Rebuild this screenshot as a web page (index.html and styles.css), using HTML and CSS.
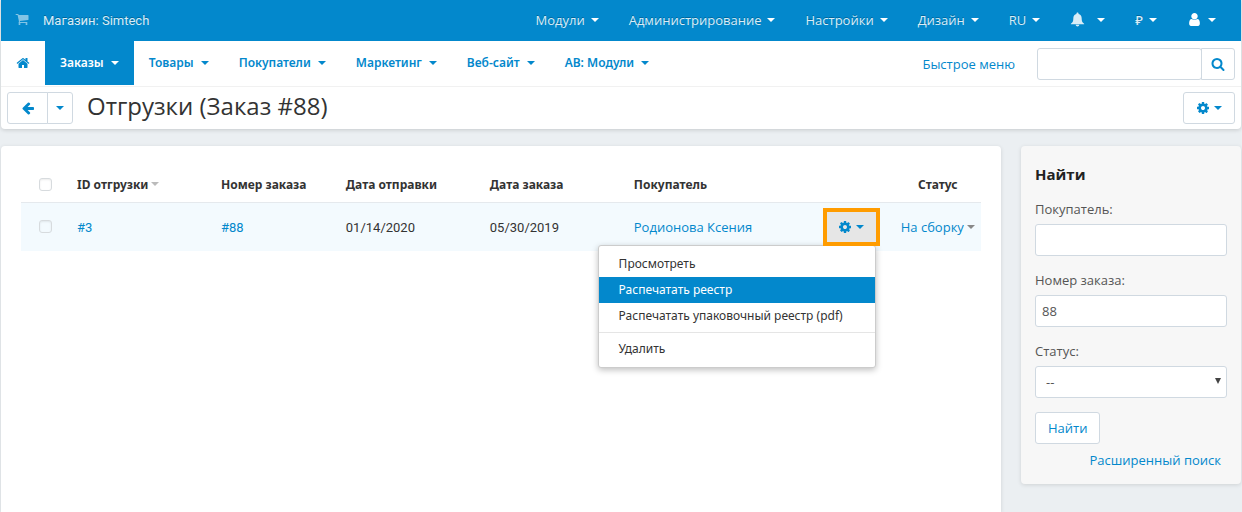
FILE: index.html
```html
<!DOCTYPE html>
<html lang="ru">
<head>
<meta charset="utf-8">
<meta name="viewport" content="width=device-width, initial-scale=1">
<title>Отгрузки (Заказ #88)</title>
<link rel="stylesheet" href="styles.css">
</head>
<body>
<svg class="sprite" aria-hidden="true">
  <symbol id="i-cart" viewBox="0 0 1792 1792"><path d="M704 1536q0 52-38 90t-90 38-90-38-38-90 38-90 90-38 90 38 38 90zm896 0q0 52-38 90t-90 38-90-38-38-90 38-90 90-38 90 38 38 90zm128-1088v512q0 24-16.500 42.500t-40.500 21.500l-1044 122q13 60 13 70 0 16-24 64h920q26 0 45 19t19 45-19 45-45 19h-1024q-26 0-45-19t-19-45q0-11 8-31.500t16-36 21.500-40 15.500-29.500l-177-823h-204q-26 0-45-19t-19-45 19-45 45-19h256q16 0 28.500 6.500t19.500 15.500 13 24.500 8 26 5.500 29.500 4.500 26h1201q26 0 45 19t19 45z"/></symbol>
  <symbol id="i-home" viewBox="0 0 1792 1792"><path d="M1472 992v480q0 26-19 45t-45 19h-384v-384h-256v384h-384q-26 0-45-19t-19-45v-480q0-1 .5-3t.5-3l575-474 575 474q1 2 1 6zm223-69l-62 74q-8 9-21 11h-3q-13 0-21-7l-692-577-692 577q-12 8-24 7-13-2-21-11l-62-74q-8-10-7-23.500t11-21.500l719-599q32-26 76-26t76 26l244 204v-195q0-14 9-23t23-9h192q14 0 23 9t9 23v408l219 182q10 8 11 21.500t-7 23.500z"/></symbol>
  <symbol id="i-back" viewBox="0 0 1792 1792"><path d="M1664 896v128q0 53-32.500 90.500t-84.500 37.500h-704l293 294q38 36 38 90t-38 90l-75 76q-37 37-90 37-52 0-91-37l-651-652q-37-37-37-90 0-52 37-91l651-650q38-38 91-38 52 0 90 38l75 74q38 38 38 91t-38 91l-293 293h704q52 0 84.500 37.500t32.500 90.500z"/></symbol>
  <symbol id="i-cog" viewBox="0 0 1792 1792"><path d="M1152 896q0-106-75-181t-181-75-181 75-75 181 75 181 181 75 181-75 75-181zm512-109v222q0 12-8 23t-20 13l-185 28q-19 54-39 91 35 50 107 138 10 12 10 25t-9 23q-27 37-99 108t-94 71q-12 0-26-9l-138-108q-44 23-91 38-16 136-29 186-7 28-36 28h-222q-14 0-24.500-8.500t-11.500-21.500l-28-184q-49-16-90-37l-141 107q-10 9-25 9-14 0-25-11-126-114-165-168-7-10-7-23 0-12 8-23 15-21 51-66.500t54-70.500q-27-50-41-99l-183-27q-13-2-21-12.500t-8-23.500v-222q0-12 8-23t19-13l186-28q14-46 39-92-40-57-107-138-10-12-10-24 0-10 9-23 26-36 98.500-107.500t94.500-71.500q13 0 26 10l138 107q44-23 91-38 16-136 29-186 7-28 36-28h222q14 0 24.500 8.500t11.500 21.500l28 184q49 16 90 37l142-107q9-9 24-9 13 0 25 10 129 119 165 170 7 8 7 22 0 12-8 23-15 21-51 66.500t-54 70.500q26 50 41 98l183 28q13 2 21 12.500t8 23.500z"/></symbol>
  <symbol id="i-search" viewBox="0 0 1792 1792"><path d="M1216 832q0-185-131.500-316.500t-316.500-131.500-316.500 131.500-131.500 316.500 131.500 316.500 316.500 131.500 316.500-131.500 131.500-316.500zm512 832q0 52-38 90t-90 38q-54 0-90-38l-343-342q-179 124-399 124-143 0-273.500-55.500t-225-150-150-225-55.500-273.500 55.500-273.500 150-225 225-150 273.500-55.500 273.500 55.500 225 150 150 225 55.500 273.500q0 220-124 399l343 343q37 37 37 90z"/></symbol>
  <symbol id="i-user" viewBox="0 0 1792 1792"><path d="M1536 1399q0 109-62.500 187t-150.500 78h-854q-88 0-150.500-78t-62.500-187q0-85 8.500-160.500t31.500-152 58.500-131 94-89 134.500-34.500q131 128 313 128t313-128q76 0 134.500 34.500t94 89 58.500 131 31.500 152 8.500 160.500zm-256-887q0 159-112.500 271.500t-271.500 112.500-271.500-112.500-112.500-271.500 112.500-271.500 271.500-112.500 271.500 112.500 112.500 271.500z"/></symbol>
  <symbol id="i-bell" viewBox="0 0 14 14"><path d="M7 .5c.6 0 1 .4 1 1v.3c1.900.5 2.900 2 2.900 4 0 3 .6 4 2.300 5.200v.5H.8V11c1.700-1.200 2.300-2.200 2.300-5.200 0-2 1-3.500 2.900-4v-.3c0-.6.4-1 1-1zM5.300 12h3.400c-.2.900-.8 1.500-1.700 1.500S5.500 12.900 5.300 12z"/></symbol>
</svg>

<header class="header">
  <div class="topbar">
    <a class="store" href="#"><svg class="icon store-icon"><use href="#i-cart"/></svg>Магазин: Simtech</a>
    <nav class="topnav" aria-label="Система">
      <a href="#">Модули<i class="caret"></i></a>
      <a href="#">Администрирование<i class="caret"></i></a>
      <a href="#">Настройки<i class="caret"></i></a>
      <a href="#">Дизайн<i class="caret"></i></a>
      <a class="lang" href="#">RU<i class="caret"></i></a>
      <a class="bell" href="#" aria-label="Уведомления"><svg class="icon icon-lg"><use href="#i-bell"/></svg><i class="caret"></i></a>
      <a class="currency" href="#">₽<i class="caret"></i></a>
      <a class="account" href="#" aria-label="Профиль"><svg class="icon icon-lg"><use href="#i-user"/></svg><i class="caret"></i></a>
    </nav>
  </div>
  <div class="mainbar">
    <nav class="mainnav" aria-label="Разделы">
      <a class="home" href="#" aria-label="Главная"><svg class="icon"><use href="#i-home"/></svg></a>
      <a class="active" href="#">Заказы<i class="caret"></i></a>
      <a href="#">Товары<i class="caret"></i></a>
      <a href="#">Покупатели<i class="caret"></i></a>
      <a href="#">Маркетинг<i class="caret"></i></a>
      <a href="#">Веб-сайт<i class="caret"></i></a>
      <a href="#">АВ: Модули<i class="caret"></i></a>
    </nav>
    <a class="quick" href="#">Быстрое меню</a>
    <form class="search">
      <input type="text" aria-label="Поиск">
      <button type="button" aria-label="Искать"><svg class="icon"><use href="#i-search"/></svg></button>
    </form>
  </div>
  <div class="titlebar">
    <div class="group">
      <button class="btn back" type="button" aria-label="Назад"><svg class="icon"><use href="#i-back"/></svg></button>
      <button class="btn more" type="button" aria-label="История"><i class="caret"></i></button>
    </div>
    <h1>Отгрузки (Заказ #88)</h1>
    <button class="btn tools" type="button" aria-label="Действия"><svg class="icon"><use href="#i-cog"/></svg><i class="caret"></i></button>
  </div>
</header>

<div class="page">
  <main class="content">
    <table class="list">
      <colgroup><col class="c-check"><col class="c-id"><col class="c-order"><col class="c-date"><col class="c-date"><col class="c-buyer"><col class="c-tools"><col class="c-status"></colgroup>
      <thead>
        <tr>
          <th class="check"><input type="checkbox" aria-label="Выбрать все"></th>
          <th>ID отгрузки<i class="caret sort"></i></th>
          <th>Номер заказа</th>
          <th>Дата отправки</th>
          <th>Дата заказа</th>
          <th>Покупатель</th>
          <th></th>
          <th class="status">Статус</th>
        </tr>
      </thead>
      <tbody>
        <tr>
          <td class="check"><input type="checkbox" aria-label="Выбрать отгрузку #3"></td>
          <td class="num"><a href="#">#3</a></td>
          <td class="num"><a href="#">#88</a></td>
          <td class="num">01/14/2020</td>
          <td class="num">05/30/2019</td>
          <td><a href="#">Родионова Ксения</a></td>
          <td class="actions">
            <div class="dropdown">
              <button class="toggle" type="button" aria-label="Действия с отгрузкой" aria-expanded="true"><svg class="icon"><use href="#i-cog"/></svg><i class="caret"></i></button>
              <ul class="menu">
                <li><a href="#">Просмотреть</a></li>
                <li><a class="current" href="#">Распечатать реестр</a></li>
                <li><a href="#">Распечатать упаковочный реестр (pdf)</a></li>
                <li class="separated"><a href="#">Удалить</a></li>
              </ul>
            </div>
          </td>
          <td class="status"><a href="#">На сборку<i class="caret state"></i></a></td>
        </tr>
      </tbody>
    </table>
  </main>

  <aside class="sidebar">
    <form class="filter">
      <h2>Найти</h2>
      <div class="field"><label for="buyer">Покупатель:</label><input id="buyer" type="text"></div>
      <div class="field"><label for="order">Номер заказа:</label><input id="order" type="text" value="88"></div>
      <div class="field"><label for="state">Статус:</label>
        <div class="select"><select id="state"><option>--</option></select></div>
      </div>
      <button class="btn find" type="button">Найти</button>
      <a class="advanced" href="#">Расширенный поиск</a>
    </form>
  </aside>
</div>
</body>
</html>
```
FILE: styles.css
```css
:root {
  --blue: #0388cc;
  --line: #d0d9e1;
  --text: #333;
  --ui: "Open Sans", "Noto Sans", sans-serif;
  --compact: "Noto Sans", "Open Sans", sans-serif;
  --num: Roboto, "Noto Sans", sans-serif;
}

* { box-sizing: border-box; }

body {
  margin: 0;
  min-height: 100vh;
  padding: 0 1px;
  display: flex;
  flex-direction: column;
  background: #ebeff2;
  color: var(--text);
  font: 13px/20px var(--ui);
}

a { color: var(--blue); text-decoration: none; }
button, input, select { font: inherit; }
button { cursor: pointer; }

.sprite { position: absolute; width: 0; height: 0; }
.icon { display: block; flex: none; width: 14px; height: 14px; fill: currentColor; }
.icon-lg { width: 15px; height: 15px; }

.caret {
  display: inline-block;
  flex: none;
  margin-left: 6px;
  border: 4px solid transparent;
  border-top-color: currentColor;
  border-bottom: 0;
  vertical-align: 3px;
}

.header {
  background: #fff;
  border-radius: 0 0 4px 4px;
  box-shadow: 0 1px 4px rgba(0, 0, 0, .16);
}

.topbar {
  display: flex;
  align-items: center;
  justify-content: space-between;
  height: 41px;
  padding: 0 10px 0 14px;
  background: var(--blue);
}
.topbar a {
  display: flex;
  align-items: center;
  color: #d9edf7;
  text-shadow: 0 -1px 0 rgba(0, 0, 0, .25);
}
.topbar .caret { color: #fff; }
.store { gap: 14px; font-family: var(--num); }
.store-icon { margin-bottom: 4px; opacity: .6; }
.topnav { display: flex; padding-bottom: 2px; font-weight: 500; }
.topnav a { padding: 0 15px; }
.topnav .bell .caret { margin-left: 12px; }
.topnav .account { color: #fff; }

.mainbar {
  display: flex;
  align-items: center;
  height: 46px;
  padding-right: 6px;
  border-bottom: 1px solid #f1f1f1;
}
.mainnav {
  display: flex;
  align-self: flex-start;
  margin-right: auto;
  font-family: var(--compact);
  font-size: 12px;
  font-weight: 600;
}
.mainnav a { display: flex; align-items: center; height: 44px; padding: 0 15px; }
.mainnav .caret { margin-left: 7px; }
.mainnav .active { background: var(--blue); color: #fff; }
.quick { margin-right: 22px; }
.search { display: flex; }
.search input { width: 165px; border-radius: 3px 0 0 3px; }
.search button {
  display: flex;
  align-items: center;
  justify-content: center;
  width: 34px;
  margin-left: -1px;
  padding: 0;
  border: 1px solid var(--line);
  border-radius: 0 3px 3px 0;
  background: #fff;
  color: var(--blue);
}

input[type="text"], select {
  height: 32px;
  padding: 0 6px;
  border: 1px solid var(--line);
  border-radius: 3px;
  background: #fff;
  color: #555;
}

.titlebar { display: flex; align-items: center; height: 42px; padding: 0 6px; }
.titlebar h1 { margin: 0 auto 4px 14px; font-size: 24px; line-height: 32px; font-weight: 400; }
.group { display: flex; }
.btn {
  display: flex;
  align-items: center;
  justify-content: center;
  height: 32px;
  padding: 0 12px;
  border: 1px solid var(--line);
  border-radius: 3px;
  background: #fff;
  color: var(--blue);
}
.back { width: 41px; border-radius: 3px 0 0 3px; }
.more { width: 26px; margin-left: -1px; padding: 0; border-radius: 0 3px 3px 0; }
.more .caret { margin: 0; }
.tools { width: 52px; }
.tools .caret, .toggle .caret { margin-left: 4px; }

.page { display: flex; flex: 1; gap: 20px; padding-top: 17px; }
.content, .sidebar { box-shadow: 0 1px 4px rgba(0, 0, 0, .12); }
.content { flex: 1; min-width: 0; padding: 20px 20px 0; border-radius: 4px 4px 0 0; background: #fff; }

.list { width: 100%; border-collapse: collapse; table-layout: fixed; }
.c-check { width: 5%; }
.c-id, .c-date { width: 15%; }
.c-order { width: 13%; }
.c-buyer { width: 20%; }
.c-tools { width: 8%; }
.c-status { width: 9%; }
.list th, .list td { padding: 0 8px; text-align: left; white-space: nowrap; }
.list th {
  height: 36px;
  padding-top: 2px;
  border-bottom: 1px solid #e5e9ed;
  font-family: var(--compact);
  font-size: 12px;
  font-weight: 700;
}
.list td { height: 49px; background: #f3fafe; }
.list .num { padding-top: 2px; font-family: var(--num); }
.list .check, .list .status { padding-left: 0; padding-right: 0; text-align: center; }
.sort { margin-left: 3px; color: #bbb; }
.state { margin-left: 3px; color: #888; }

input[type="checkbox"] {
  display: block;
  appearance: none;
  width: 13px;
  height: 13px;
  margin: 0 auto;
  border: 1px solid #d7dbde;
  border-radius: 3px;
  background: transparent;
  box-shadow: inset 0 1px 2px rgba(0, 0, 0, .08);
}

.list .actions { padding-left: 0; padding-right: 19px; }
.dropdown { position: relative; width: 49px; margin-left: auto; }
.toggle {
  position: relative;
  z-index: 2;
  display: flex;
  align-items: center;
  justify-content: center;
  width: 100%;
  height: 30px;
  padding: 0;
  border: 0;
  outline: 4px solid #ff9c00;
  background: #e6e6e6;
  color: var(--blue);
}
.menu {
  position: absolute;
  z-index: 1;
  top: 33px;
  right: 0;
  min-width: 278px;
  margin: 0;
  padding: 5px 0;
  border: 1px solid #ccc;
  border-radius: 3px;
  background: #fff;
  box-shadow: 0 2px 6px rgba(0, 0, 0, .25);
  font-family: var(--compact);
  font-size: 12px;
  list-style: none;
}
.menu a { display: block; padding: 3px 20px; color: var(--text); }
.menu .current { background: var(--blue); color: #fff; }
.menu .separated { margin-top: 3px; padding-top: 3px; border-top: 1px solid #e5e5e5; }

.sidebar {
  flex: none;
  align-self: flex-start;
  width: 220px;
  padding: 18px 14px 14px;
  border-radius: 4px;
  background: #f7f7f7;
}
.filter { display: flex; flex-direction: column; }
.filter h2 { margin: 0 0 15px; color: #222; font-size: 15px; line-height: 20px; font-weight: 700; }
.field { display: flex; flex-direction: column; gap: 5px; margin-bottom: 14px; color: #555; }
.select { position: relative; }
.select select { width: 100%; padding: 0 10px; appearance: none; }
.select::after {
  content: "";
  position: absolute;
  top: 12px;
  right: 6px;
  border: 3px solid transparent;
  border-top: 6px solid #444;
  border-bottom: 0;
  pointer-events: none;
}
.find { align-self: flex-start; }
.advanced { align-self: flex-end; margin: 6px 6px 0 0; }
```
